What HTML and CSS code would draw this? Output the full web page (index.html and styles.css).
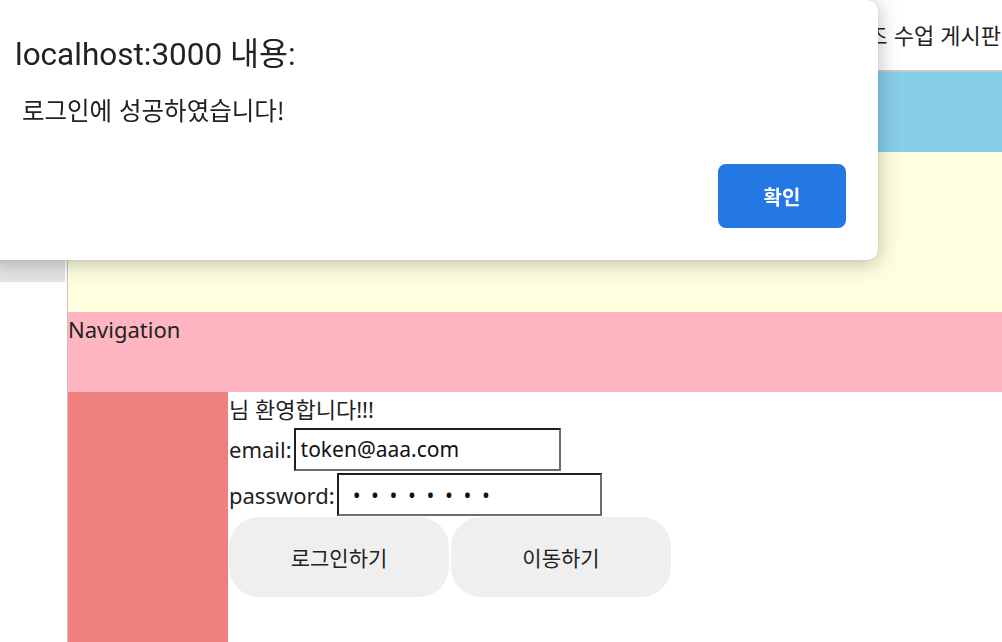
FILE: index.html
```html
<!DOCTYPE html>
<html lang="ko">
<head>
<meta charset="utf-8">
<title>게시판</title>
<link rel="stylesheet" href="styles.css">
</head>
<body>
<div class="page">
  <aside class="side-panel">
    <div class="side-block"></div>
  </aside>
  <div class="main">
    <header class="top-header"><span class="top-title">코드캠프 퀴즈 수업 게시판</span></header>
    <div class="banner"></div>
    <div class="hero"></div>
    <nav class="navigation">Navigation</nav>
    <div class="body-row">
      <div class="sidebar"></div>
      <section class="content">
        <div class="welcome">님 환영합니다!!!</div>
        <div class="field-row">
          <label class="field-label" for="email">email:</label>
          <input class="field-input input-email" id="email" type="text" value="token@aaa.com">
        </div>
        <div class="field-row field-row-pw">
          <label class="field-label" for="pw">password:</label>
          <input class="field-input input-password" id="pw" type="password" value="12345678">
        </div>
        <div class="button-row">
          <button class="pill-btn" type="button">로그인하기</button>
          <button class="pill-btn" type="button">이동하기</button>
        </div>
      </section>
    </div>
  </div>
</div>

<div class="dialog" role="alertdialog">
  <div class="dialog-title">localhost:3000 내용:</div>
  <div class="dialog-message">로그인에 성공하였습니다!</div>
  <div class="dialog-actions">
    <button class="dialog-ok" type="button">확인</button>
  </div>
</div>
</body>
</html>
```
FILE: styles.css
```css
* { box-sizing: border-box; }
html, body { margin: 0; padding: 0; }
body {
  width: 1002px;
  height: 642px;
  overflow: hidden;
  background: #fff;
  color: #222;
  font-family: "Noto Sans", "Noto Sans CJK KR", sans-serif;
  font-size: 22px;
}
.page {
  display: flex;
  height: 642px;
}
.side-panel {
  width: 68px;
  flex: none;
  border-right: 1px solid #c4c4c4;
  padding-right: 2px;
  padding-top: 242px;
}
.side-block {
  height: 40px;
  background: #e4e5e8;
}
.main {
  flex: 1;
  display: flex;
  flex-direction: column;
  min-width: 0;
}
.top-header {
  height: 72px;
  flex: none;
  border-bottom: 2px solid #c8c8c8;
  display: flex;
  align-items: center;
  justify-content: flex-end;
  white-space: nowrap;
  overflow: hidden;
  padding-bottom: 2px;
}
.top-title {
  font-family: "Noto Sans CJK KR", sans-serif;
  font-size: 22px;
  color: #222;
  margin-right: 1px;
}
.banner {
  height: 80px;
  flex: none;
  background: #87ceeb;
}
.hero {
  height: 160px;
  flex: none;
  background: #ffffe0;
}
.navigation {
  height: 80px;
  flex: none;
  background: #ffb6c1;
  line-height: 34px;
}
.body-row {
  flex: 1;
  display: flex;
}
.sidebar {
  width: 160px;
  flex: none;
  background: #f08080;
}
.content {
  flex: 1;
  padding-left: 1px;
  display: flex;
  flex-direction: column;
}
.welcome {
  height: 34px;
  line-height: 34px;
}
.field-row {
  height: 46px;
  display: flex;
  align-items: center;
  gap: 2px;
}
.field-row-pw {
  height: 45px;
}
.field-label {
  line-height: 30px;
}
.field-input {
  height: 43px;
  margin: 0;
  padding: 0 5px;
  font-family: "Noto Sans", "Noto Sans CJK KR", sans-serif;
  font-size: 21px;
  color: #111;
  background: #fff;
  border-width: 2px;
  border-style: solid;
  border-color: #1f1f1f #6d6d6d #6d6d6d #1f1f1f;
  outline: none;
}
.input-email { width: 267px; }
.input-password {
  width: 265px;
  letter-spacing: 10.6px;
  padding-left: 14px;
}
.button-row {
  display: flex;
  gap: 2px;
}
.pill-btn {
  width: 220px;
  height: 80px;
  border: none;
  border-radius: 30px;
  background: #efefef;
  color: #222;
  font-family: "Noto Sans CJK KR", sans-serif;
  font-size: 21px;
  padding: 0;
}

.dialog {
  position: fixed;
  top: 0;
  left: -12px;
  width: 890px;
  height: 260px;
  background: #fff;
  border-radius: 10px;
  box-shadow: 0 3px 22px rgba(0, 0, 0, 0.28), 0 0 1px rgba(0, 0, 0, 0.3);
  display: flex;
  flex-direction: column;
  padding: 0 32px 0 12px;
  font-family: Roboto, "Noto Sans CJK KR", sans-serif;
  color: #222;
}
.dialog-title {
  padding-top: 37px;
  padding-left: 15px;
  font-size: 31.5px;
  line-height: 36px;
}
.dialog-message {
  margin-top: 22px;
  padding-left: 22px;
  font-family: "Noto Sans CJK KR", sans-serif;
  font-size: 24.5px;
  line-height: 30px;
}
.dialog-actions {
  display: flex;
  justify-content: flex-end;
  margin-top: 39px;
}
.dialog-ok {
  width: 128px;
  height: 64px;
  border: none;
  border-radius: 8px;
  background: #2478e4;
  color: #fff;
  font-family: "Noto Sans CJK KR", sans-serif;
  font-weight: 700;
  font-size: 20px;
  padding: 0;
}
```
